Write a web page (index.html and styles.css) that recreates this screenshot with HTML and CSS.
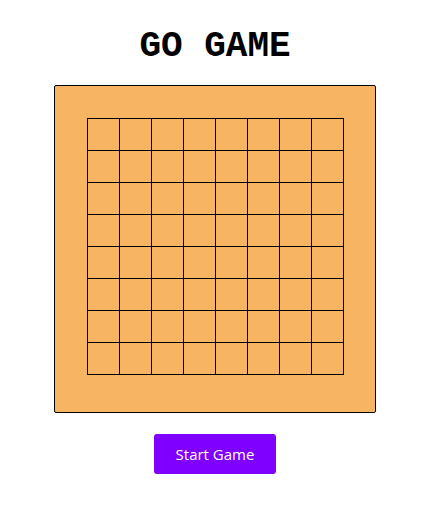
FILE: index.html
```html
<!DOCTYPE html>
<html>
<head>
<meta charset="utf-8">
<link rel="stylesheet" href="styles.css">
</head>
<body>
<div class="app">
  <h1 class="title">GO GAME</h1>
  <div class="board">
    <div class="grid" id="grid"></div>
  </div>
  <button class="start">Start Game</button>
</div>
<script>
  var g = document.getElementById('grid');
  for (var i = 0; i < 64; i++) { var c = document.createElement('div'); c.className = 'cell'; g.appendChild(c); }
</script>
</body>
</html>
```
FILE: styles.css
```css
html, body { margin: 0; padding: 0; background: #fff; }
.app {
  width: 430px;
  display: flex;
  flex-direction: column;
  align-items: center;
}
.title {
  font-family: "Liberation Mono", monospace;
  font-weight: bold;
  font-size: 36px;
  line-height: 40px;
  margin: 27px 0 18px;
  color: #000;
}
.board {
  width: 320px;
  height: 326px;
  box-sizing: content-box;
  background: #f7b563;
  border: 1px solid #000;
  border-radius: 2px;
  padding: 0;
  display: flex;
  justify-content: center;
  align-items: flex-start;
}
.grid {
  margin-top: 32px;
  display: grid;
  grid-template-columns: repeat(8, 32px);
  grid-template-rows: repeat(8, 32px);
  border-left: 1px solid #000;
  border-top: 1px solid #000;
}
.cell {
  border-right: 1px solid #000;
  border-bottom: 1px solid #000;
  box-sizing: border-box;
  width: 32px;
  height: 32px;
}
.start {
  margin-top: 21px;
  width: 122px;
  height: 40px;
  border: none;
  border-radius: 3px;
  background: #7f00ff;
  color: #fff;
  font-family: "Open Sans", sans-serif;
  font-size: 15px;
  cursor: pointer;
}
```
